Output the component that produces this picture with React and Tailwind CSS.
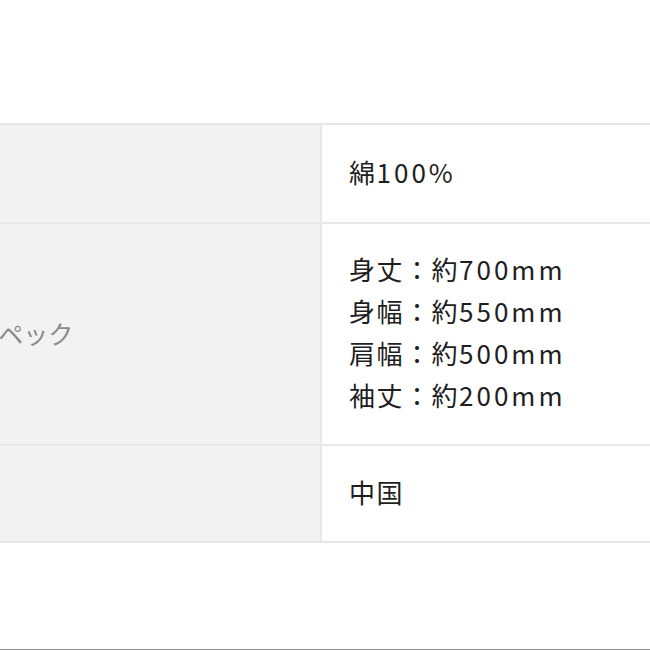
const rows = [
  { label: '', value: [['綿', '100%']], h: 'h-[97px]' },
  {
    label: 'スペック',
    value: [
      ['身丈：約', '700mm'],
      ['身幅：約', '550mm'],
      ['肩幅：約', '500mm'],
      ['袖丈：約', '200mm'],
    ],
    h: 'h-[222px]',
  },
  { label: '', value: [['中国', '']], h: 'h-[97px]' },
]

export default function App() {
  return (
    <div className="w-[650px] h-[650px] overflow-hidden bg-white relative font-['Noto_Sans_CJK_JP','Noto_Sans',sans-serif]">
      <div className="h-[123px]" />
      <div className="-ml-[48px] w-[698px] border-t-2 border-b-2 border-[#e6e6e6]">
        {rows.map((row, i) => (
          <div
            key={i}
            className={`grid grid-cols-[370px_1fr] ${row.h} ${i > 0 ? 'border-t-2 border-[#e8e8e8]' : ''}`}
          >
            <div className="bg-[#f2f2f2] border-r-2 border-[#e8e8e8] flex items-center pl-[23px] text-[25px] text-[#8a8a8a]">
              {row.label}
            </div>
            <div className="flex flex-col justify-center pl-[27px] pb-[4px] text-[26px] leading-[42px] text-[#1e1e1e] tracking-[1.5px]">
              {row.value.map(([jp, num]) => (
                <div key={jp + num}>
                  {jp}
                  <span className="tracking-[3px]">{num}</span>
                </div>
              ))}
            </div>
          </div>
        ))}
      </div>
      <div className="absolute bottom-0 left-0 w-full h-px bg-[#8a8a8a]" />
    </div>
  )
}
